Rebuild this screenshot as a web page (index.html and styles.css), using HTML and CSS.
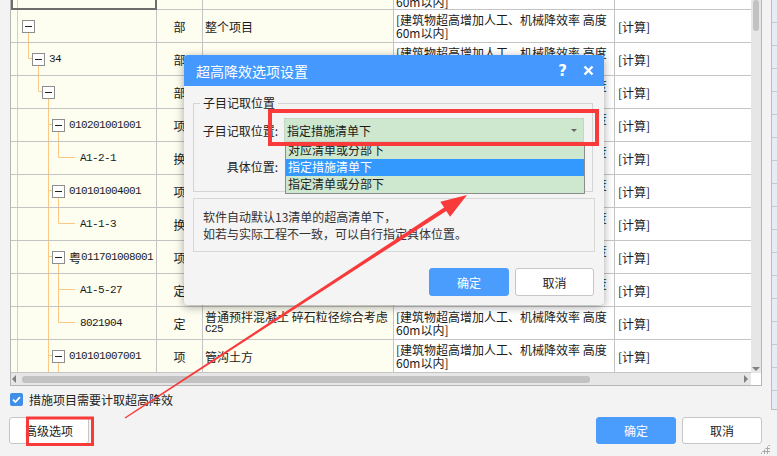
FILE: index.html
```html
<!DOCTYPE html>
<html lang="zh-CN">
<head>
    <meta charset="UTF-8">
    <title>超高降效</title>
    <link rel="stylesheet" href="styles.css">
</head>
<body>
    <div class="window">
        <div class="main">
            <div class="grid-frame">
                <div class="grid-body">
                    <!-- tree connectors, painted under the cells -->
                    <svg class="tree-lines" width="146" height="373" viewBox="0 0 146 373">
                        <g stroke="#fcc984" stroke-width="1" fill="none">
                            <path d="M6.5 0V373"/>
                            <path d="M17.5 25.5V58.5H21"/>
                            <path d="M27.5 58.5V91.5H31"/>
                            <path d="M37.5 91.5V373M37.5 124.5H41M37.5 190.5H41M37.5 256.5H41M37.5 355.5H41"/>
                            <path d="M47.5 124.5V157.5H64"/>
                            <path d="M47.5 190.5V223.5H64"/>
                            <path d="M47.5 256.5V322.5H64M47.5 289.5H64"/>
                            <path d="M47.5 355.5V373"/>
                        </g>
                    </svg>

                    <div class="row row-top">
                        <div class="cell c1 focus"></div>
                        <div class="cell c2"></div>
                        <div class="cell c3"></div>
                        <div class="cell c4"><span class="tail">60m以内]</span></div>
                        <div class="cell c5"></div>
                    </div>
                    <div class="row">
                        <div class="cell c1 lv1"><span class="tree-box"></span></div>
                        <div class="cell c2">部</div>
                        <div class="cell c3">整个项目</div>
                        <div class="cell c4">[建筑物超高增加人工、机械降效率 高度<br>60m以内]</div>
                        <div class="cell c5">[计算]</div>
                    </div>
                    <div class="row">
                        <div class="cell c1 lv2"><span class="tree-box"></span><span class="code">34</span></div>
                        <div class="cell c2">部</div>
                        <div class="cell c3"></div>
                        <div class="cell c4">[建筑物超高增加人工、机械降效率 高度<br>60m以内]</div>
                        <div class="cell c5">[计算]</div>
                    </div>
                    <div class="row">
                        <div class="cell c1 lv3"><span class="tree-box"></span></div>
                        <div class="cell c2">部</div>
                        <div class="cell c3"></div>
                        <div class="cell c4">[建筑物超高增加人工、机械降效率 高度<br>60m以内]</div>
                        <div class="cell c5">[计算]</div>
                    </div>
                    <div class="row">
                        <div class="cell c1 lv4"><span class="tree-box"></span><span class="code">010201001001</span></div>
                        <div class="cell c2">项</div>
                        <div class="cell c3"></div>
                        <div class="cell c4">[建筑物超高增加人工、机械降效率 高度<br>60m以内]</div>
                        <div class="cell c5">[计算]</div>
                    </div>
                    <div class="row">
                        <div class="cell c1 leaf"><span class="code">A1-2-1</span></div>
                        <div class="cell c2">换</div>
                        <div class="cell c3"></div>
                        <div class="cell c4">[建筑物超高增加人工、机械降效率 高度<br>60m以内]</div>
                        <div class="cell c5">[计算]</div>
                    </div>
                    <div class="row">
                        <div class="cell c1 lv4"><span class="tree-box"></span><span class="code">010101004001</span></div>
                        <div class="cell c2">项</div>
                        <div class="cell c3"></div>
                        <div class="cell c4">[建筑物超高增加人工、机械降效率 高度<br>60m以内]</div>
                        <div class="cell c5">[计算]</div>
                    </div>
                    <div class="row">
                        <div class="cell c1 leaf"><span class="code">A1-1-3</span></div>
                        <div class="cell c2">换</div>
                        <div class="cell c3"></div>
                        <div class="cell c4">[建筑物超高增加人工、机械降效率 高度<br>60m以内]</div>
                        <div class="cell c5">[计算]</div>
                    </div>
                    <div class="row">
                        <div class="cell c1 lv4"><span class="tree-box"></span>粤<span class="code">011701008001</span></div>
                        <div class="cell c2">项</div>
                        <div class="cell c3"></div>
                        <div class="cell c4">[建筑物超高增加人工、机械降效率 高度<br>60m以内]</div>
                        <div class="cell c5">[计算]</div>
                    </div>
                    <div class="row">
                        <div class="cell c1 leaf"><span class="code">A1-5-27</span></div>
                        <div class="cell c2">定</div>
                        <div class="cell c3"></div>
                        <div class="cell c4">[建筑物超高增加人工、机械降效率 高度<br>60m以内]</div>
                        <div class="cell c5">[计算]</div>
                    </div>
                    <div class="row">
                        <div class="cell c1 leaf"><span class="code">8021904</span></div>
                        <div class="cell c2">定</div>
                        <div class="cell c3">普通预拌混凝土 碎石粒径综合考虑<br><span class="code">C25</span></div>
                        <div class="cell c4">[建筑物超高增加人工、机械降效率 高度<br>60m以内]</div>
                        <div class="cell c5">[计算]</div>
                    </div>
                    <div class="row">
                        <div class="cell c1 lv4"><span class="tree-box"></span><span class="code">010101007001</span></div>
                        <div class="cell c2">项</div>
                        <div class="cell c3">管沟土方</div>
                        <div class="cell c4">[建筑物超高增加人工、机械降效率 高度<br>60m以内]</div>
                        <div class="cell c5">[计算]</div>
                    </div>
                </div>
                <div class="vscroll">
                    <span class="v-thumb"></span>
                    <span class="arrow-down"></span>
                </div>
                <div class="hscroll">
                    <span class="arrow-left"></span>
                    <span class="h-thumb"></span>
                    <span class="arrow-right"></span>
                </div>
                <div class="corner"></div>
            </div>

            <div class="footer">
                <label class="check-row">
                    <span class="checkbox">
                        <svg width="13" height="13" viewBox="0 0 13 13"><path d="M3 6.6l2.4 2.4 4.6-4.8" stroke="#fff" stroke-width="1.8" fill="none"/></svg>
                    </span>
                    措施项目需要计取超高降效
                </label>
                <div class="footer-buttons">
                    <button class="btn">高级选项</button>
                    <div class="btn-group">
                        <button class="btn primary">确定</button>
                        <button class="btn">取消</button>
                    </div>
                </div>
            </div>
        </div>
        <div class="side-window"></div>
    </div>
    <span class="grip"></span>

    <div class="dialog">
        <div class="dialog-title">
            <span>超高降效选项设置</span>
            <span class="title-tools">
                <span class="help">?</span>
                <svg width="11" height="11" viewBox="0 0 11 11"><path d="M1.5 1.5l8 8M9.5 1.5l-8 8" stroke="#fff" stroke-width="2.4"/></svg>
            </span>
        </div>
        <div class="dialog-body">
            <fieldset class="group">
                <legend>子目记取位置</legend>
                <div class="field-row">
                    <span class="field-label">子目记取位置:</span>
                    <div class="combo">
                        <span>指定措施清单下</span>
                        <span class="combo-arrow"></span>
                        <ul class="combo-list">
                            <li>对应清单或分部下</li>
                            <li class="selected">指定措施清单下</li>
                            <li>指定清单或分部下</li>
                        </ul>
                    </div>
                </div>
                <div class="field-row">
                    <span class="field-label">具体位置:</span>
                </div>
            </fieldset>
            <div class="note">软件自动默认13清单的超高清单下，<br>如若与实际工程不一致，可以自行指定具体位置。</div>
            <div class="dialog-buttons">
                <button class="btn primary">确定</button>
                <button class="btn">取消</button>
            </div>
        </div>
    </div>

    <!-- red callouts drawn over the page -->
    <svg class="marks" width="777" height="456" viewBox="0 0 777 456">
        <rect x="270" y="111" width="327" height="33" fill="none" stroke="#f83a3a" stroke-width="4"/>
        <rect x="27.5" y="418" width="65" height="26.5" fill="none" stroke="#f83a3a" stroke-width="3"/>
        <polygon points="124.6,417.6 444.1,207.5 440.3,201.7 467,195 450.1,216.7 446.3,210.9 125.4,418.4" fill="#f83a3a"/>
    </svg>
</body>
</html>
```

FILE: styles.css
```css
body {
    margin: 0;
    width: 777px;
    height: 456px;
    overflow: hidden;
    background: #f3f3f3;
    color: #1a1a1a;
    font-family: "Noto Sans CJK SC", "Liberation Sans", sans-serif;
    font-size: 12px;
    position: relative;
}

.window {
    display: flex;
    align-items: flex-start;
}

.main {
    width: 771px;
}

/* data grid */

.grid-frame {
    margin-left: 10px;
    width: 752px;
    box-sizing: border-box;
    display: grid;
    grid-template-columns: 740px 10px;
    grid-template-rows: 373px 12px;
    border: 1px solid #b6b6b6;
    border-top: 0;
}

.grid-body {
    position: relative;
    z-index: 0;
    overflow: hidden;
    background: #fdfdf0;
}

.tree-lines {
    position: absolute;
    left: 0;
    top: 0;
    z-index: -1;
}

.row {
    display: grid;
    grid-template-columns: 146px 46px 191px 221px 136px;
    height: 33px;
}

.row-top {
    height: 10px;
}

.cell {
    box-sizing: border-box;
    border-right: 1px solid #c4c4c4;
    border-bottom: 1px solid #c4c4c4;
    display: flex;
    align-items: center;
    line-height: 13px;
    white-space: nowrap;
    overflow: hidden;
}

.c1 {
    background: transparent;
}

.c2 {
    justify-content: center;
    background: #fdfdf0;
}

.c3 {
    padding-left: 2px;
    background: #fdfdf0;
    display: block;
    padding-top: 3px;
}

.row .c3:empty {
    padding: 0;
}

.c4 {
    padding-left: 2px;
    background: #fff;
}

.c5 {
    padding-left: 3px;
    background: #fff;
    border-right: 0;
}

.row .c3 {
    display: flex;
    flex-direction: column;
    align-items: flex-start;
    justify-content: center;
    padding-top: 0;
}

.tail {
    margin-top: -7px;
}

.focus {
    border-left: 2px solid #6c6c6c;
    border-right: 2px solid #6c6c6c;
    border-bottom: 2px solid #6c6c6c;
}

.lv1 { padding-left: 11px; }
.lv2 { padding-left: 21px; }
.lv3 { padding-left: 31px; }
.lv4 { padding-left: 41px; }
.leaf { padding-left: 69px; }

.tree-box {
    flex: none;
    width: 13px;
    height: 13px;
    box-sizing: border-box;
    border: 1px solid #8e8e8e;
    background: #fff;
    display: inline-flex;
    align-items: center;
    justify-content: center;
    margin-right: 4px;
}

.tree-box::before {
    content: "";
    width: 7px;
    height: 1px;
    background: #222;
}

.code {
    font-family: "Liberation Mono", monospace;
    font-size: 11px;
    letter-spacing: -0.6px;
}

/* scrollbars */

.vscroll {
    background: #e6e6e6;
    display: flex;
    flex-direction: column;
    align-items: center;
    justify-content: space-between;
}

.v-thumb {
    width: 6px;
    height: 31px;
    border-radius: 3px;
    background: #c2c2c2;
}

.arrow-down {
    width: 0;
    height: 0;
    border-left: 4px solid transparent;
    border-right: 4px solid transparent;
    border-top: 4px solid #808080;
    margin-bottom: 2px;
}

.hscroll {
    background: #e6e6e6;
    display: flex;
    align-items: center;
}

.arrow-left {
    width: 0;
    height: 0;
    border-top: 4px solid transparent;
    border-bottom: 4px solid transparent;
    border-right: 4px solid #808080;
    margin-left: 1px;
}

.h-thumb {
    width: 568px;
    height: 7px;
    border-radius: 3px;
    background: #c2c2c2;
    margin-left: 6px;
}

.arrow-right {
    width: 0;
    height: 0;
    border-top: 4px solid transparent;
    border-bottom: 4px solid transparent;
    border-left: 4px solid #808080;
    margin-left: auto;
    margin-right: 3px;
}

.corner {
    background: #fff;
}

/* bottom bar */

.footer {
    padding: 7px 9px 0 9px;
}

.check-row {
    display: flex;
    align-items: center;
    height: 13px;
    padding-left: 1px;
    color: #222;
}

.checkbox {
    width: 13px;
    height: 13px;
    border-radius: 2px;
    background: #3f8ee8;
    margin-right: 6px;
    display: flex;
}

.footer-buttons {
    display: flex;
    justify-content: space-between;
    margin-top: 11px;
}

.btn-group {
    display: flex;
    gap: 6px;
}

.btn {
    width: 80px;
    height: 27px;
    box-sizing: border-box;
    border: 1px solid #c6c6c6;
    border-radius: 3px;
    background: #fff;
    color: #222;
    font-family: inherit;
    font-size: 12px;
    padding: 0;
}

.btn.primary {
    background: #4a9cfd;
    border-color: #4a9cfd;
    color: #fff;
}

.side-window {
    width: 6px;
    height: 410px;
    box-sizing: border-box;
    border-left: 1px solid #bdbdbd;
    border-bottom: 1px solid #bdbdbd;
    background: repeating-linear-gradient(to bottom, #e6ecf5 0, #e6ecf5 22px, #c9c9c9 22px, #c9c9c9 23px);
}

.grip {
    position: absolute;
    right: 7px;
    bottom: 2px;
    width: 10px;
    height: 10px;
    background: radial-gradient(circle, #a8a8a8 1px, transparent 1.3px) 0 0 / 3px 3px;
    clip-path: polygon(100% 0, 100% 100%, 0 100%);
}

/* dialog */

.dialog {
    position: absolute;
    left: 184px;
    top: 55px;
    width: 420px;
    height: 250px;
    background: #f4f4f4;
    border-radius: 4px;
    box-shadow: 0 2px 10px rgba(0, 0, 0, 0.35);
    overflow: visible;
}

.dialog-title {
    height: 31px;
    background: #4599fe;
    border-radius: 4px 4px 0 0;
    color: #fff;
    font-size: 14px;
    padding: 0 10px 0 12px;
    display: flex;
    align-items: center;
    justify-content: space-between;
}

.title-tools {
    display: flex;
    align-items: center;
    gap: 16px;
}

.help {
    font-family: "DejaVu Sans", sans-serif;
    font-weight: bold;
    font-size: 15px;
}

.dialog-body {
    padding: 9px 10px 0 9px;
}

.group {
    margin: 0;
    width: 400px;
    box-sizing: border-box;
    padding: 7px 0 13px 6px;
    border: 1px solid #d4d4d4;
}

.group legend {
    padding: 0 3px;
    line-height: 16px;
    color: #222;
}

.field-row {
    display: flex;
    align-items: center;
    height: 24px;
}

.field-row + .field-row {
    margin-top: 12px;
}

.field-label {
    width: 76px;
    margin: 0 6px 0 2px;
    text-align: right;
    color: #222;
}

.combo {
    position: relative;
    width: 300px;
    height: 24px;
    box-sizing: border-box;
    border: 1px solid #c6d6c6;
    background: #cde8cf;
    display: flex;
    align-items: center;
    justify-content: space-between;
    padding: 0 6px 0 2px;
}

.combo-arrow {
    width: 0;
    height: 0;
    border-left: 3px solid transparent;
    border-right: 3px solid transparent;
    border-top: 3px solid #666;
}

.combo-list {
    position: absolute;
    left: 0;
    top: 23px;
    width: 300px;
    margin: 0;
    padding: 0;
    list-style: none;
    box-sizing: border-box;
    border: 1px solid #8c8c8c;
    background: #cde8cf;
}

.combo-list li {
    height: 17px;
    line-height: 15px;
    padding-left: 2px;
    color: #222;
}

.combo-list li:first-child {
    height: 16px;
    line-height: 13px;
}

.combo-list li.selected {
    background: #3399ff;
    color: #fff;
}

.note {
    margin-top: 6px;
    width: 402px;
    box-sizing: border-box;
    border: 1px solid #d8d8d8;
    padding: 9px 9px;
    line-height: 17px;
    color: #333;
}

.dialog-buttons {
    display: flex;
    justify-content: flex-end;
    gap: 6px;
    margin-top: 16px;
}

.dialog-buttons .btn {
    height: 28px;
}

.dialog-buttons .btn + .btn {
    width: 79px;
}

.marks {
    position: absolute;
    left: 0;
    top: 0;
    pointer-events: none;
}
```
